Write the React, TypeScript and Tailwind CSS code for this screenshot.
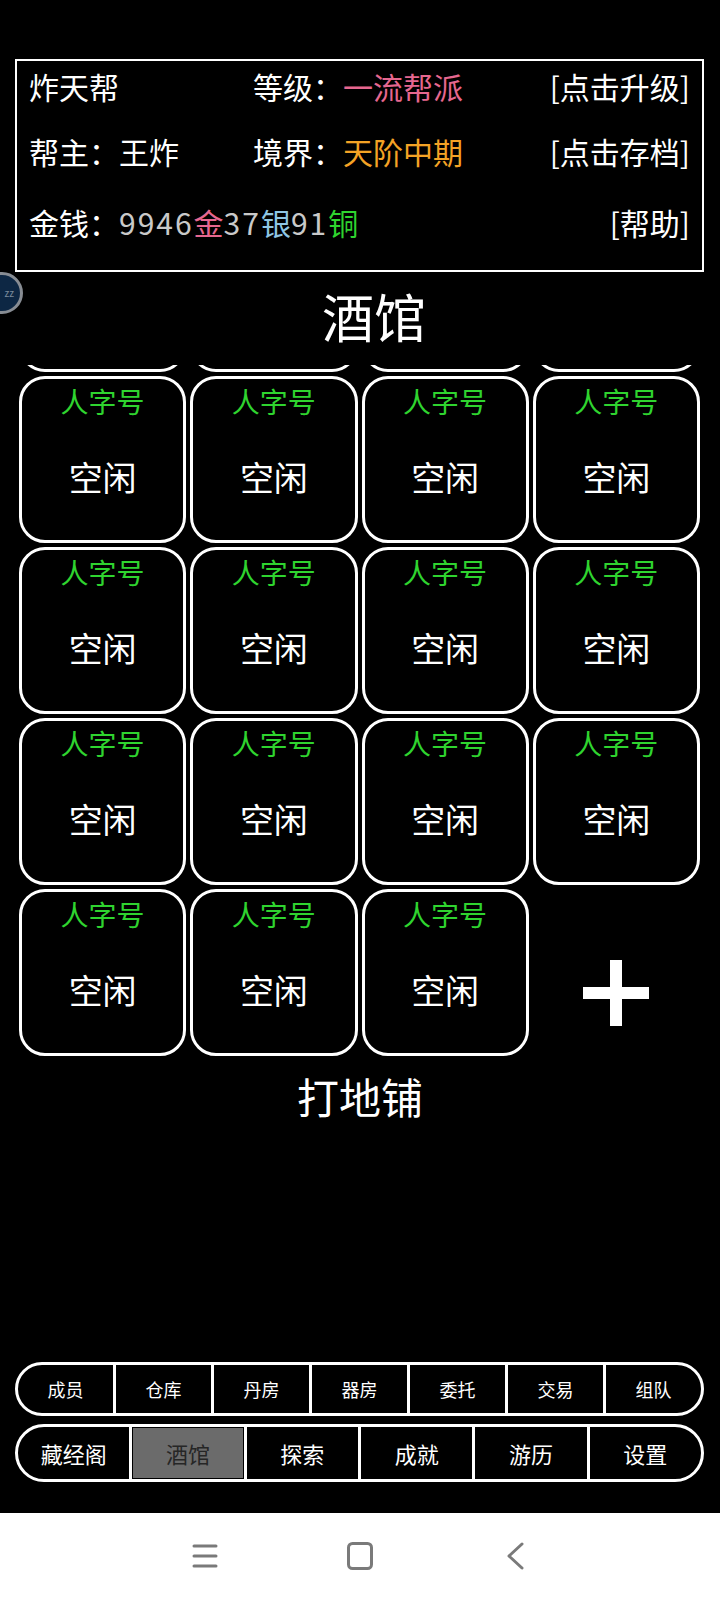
import React from 'react';

const FONT = "font-['Noto_Sans_CJK_SC','Noto_Sans',sans-serif]";

const topTabs = ['成员', '仓库', '丹房', '器房', '委托', '交易', '组队'];
const bottomTabs = ['藏经阁', '酒馆', '探索', '成就', '游历', '设置'];

function Room() {
  return (
    <div className="h-[167px] rounded-[26px] border-[3px] border-white flex flex-col items-center">
      <span className="pt-[8px] text-[28px] leading-none text-[#2fd42f]">人字号</span>
      <span className="mt-[45px] text-[34px] leading-none text-white">空闲</span>
    </div>
  );
}

export default function App() {
  const rooms = Array.from({ length: 19 });

  return (
    <div className={`${FONT} relative w-[720px] h-[1600px] bg-black flex flex-col pt-[59px] overflow-hidden`}>
      {/* floating avatar bubble */}
      <div className="absolute left-[-19px] top-[272px] w-[42px] h-[42px] rounded-full bg-[#0d2744] border-[3px] border-[#878c93] flex items-center justify-end pr-[6px]">
        <span className="text-[10px] leading-none text-[#7b8b9c]">zz</span>
      </div>

      {/* header info */}
      <div className="ml-[15px] mr-[16px] border-2 border-white pl-[12px] pr-[12px] pb-[17px] text-[30px] text-white">
        <div className="h-[50px] flex items-center leading-none">
          <span className="w-[224px]">炸天帮</span>
          <span className="flex-1">
            等级：<span className="text-[#e6678f]">一流帮派</span>
          </span>
          <span>[点击升级]</span>
        </div>
        <div className="h-[80px] flex items-center leading-none">
          <span className="w-[224px]">帮主：王炸</span>
          <span className="flex-1">
            境界：<span className="text-[#f4a325]">天阶中期</span>
          </span>
          <span>[点击存档]</span>
        </div>
        <div className="h-[62px] flex items-center leading-none">
          <span className="flex-1">
            金钱：
            <span className="text-[#c9c9c9] tracking-[2px]">9946</span>
            <span className="text-[#e6678f]">金</span>
            <span className="text-[#c9c9c9] tracking-[2px]">37</span>
            <span className="text-[#8fc6e4]">银</span>
            <span className="text-[#c9c9c9] tracking-[2px]">91</span>
            <span className="text-[#2fd42f]">铜</span>
          </span>
          <span>[帮助]</span>
        </div>
      </div>

      {/* title */}
      <div className="h-[93px] pb-[5px] pl-[28px] flex items-center justify-center text-[52px] leading-none text-white">
        酒馆
      </div>

      {/* room grid (scrolled) */}
      <div className="h-[695px] overflow-hidden pl-[19px] pr-[20px]">
        <div className="-mt-[160px] grid grid-cols-4 gap-[4px]">
          {rooms.map((_, i) => (
            <Room key={i} />
          ))}
          <div className="h-[167px] flex items-center justify-center pt-[40px]">
            <svg width="66" height="66" viewBox="0 0 66 66">
              <rect x="27" y="0" width="12" height="66" fill="#fff" />
              <rect x="0" y="27" width="66" height="12" fill="#fff" />
            </svg>
          </div>
        </div>
      </div>

      <div className="h-[72px] flex items-center justify-center text-[42px] leading-none text-white">
        打地铺
      </div>

      <div className="flex-1" />

      {/* bottom tabs */}
      <div className="ml-[15px] mr-[16px] flex flex-col gap-[8px]">
        <div className="h-[54px] flex rounded-full border-[3px] border-white overflow-hidden">
          {topTabs.map((t, i) => (
            <div
              key={t}
              className={`flex-1 flex items-center justify-center text-[18px] text-white ${i > 0 ? 'border-l-[3px] border-white' : ''}`}
            >
              {t}
            </div>
          ))}
        </div>
        <div className="h-[58px] flex rounded-full border-[3px] border-white overflow-hidden">
          {bottomTabs.map((t, i) => (
            <div
              key={t}
              className={`flex-1 p-[1px] ${i > 0 ? 'border-l-[3px] border-white' : ''}`}
            >
              <div
                className={`h-full flex items-center justify-center text-[22px] ${t === '酒馆' ? 'bg-[#6b6b6b] text-[#262626]' : 'text-white'}`}
              >
                {t}
              </div>
            </div>
          ))}
        </div>
      </div>

      <div className="h-[31px]" />

      {/* system navigation bar */}
      <div className="h-[87px] bg-white flex items-center pl-[192px] pb-[2px]">
        <svg width="26" height="24" viewBox="0 0 26 24">
          <g stroke="#7a7a7a" strokeWidth="3" strokeLinecap="round">
            <line x1="2" y1="2" x2="24" y2="2" />
            <line x1="2" y1="12" x2="24" y2="12" />
            <line x1="2" y1="22" x2="24" y2="22" />
          </g>
        </svg>
        <svg className="ml-[129px]" width="26" height="28" viewBox="0 0 26 28">
          <rect x="1.5" y="1.5" width="23" height="25" rx="4" fill="none" stroke="#7a7a7a" strokeWidth="3" />
        </svg>
        <svg className="ml-[133px]" width="18" height="28" viewBox="0 0 18 28">
          <polyline points="16,2 3,14 16,26" fill="none" stroke="#7a7a7a" strokeWidth="3" strokeLinecap="round" strokeLinejoin="round" />
        </svg>
      </div>
    </div>
  );
}
